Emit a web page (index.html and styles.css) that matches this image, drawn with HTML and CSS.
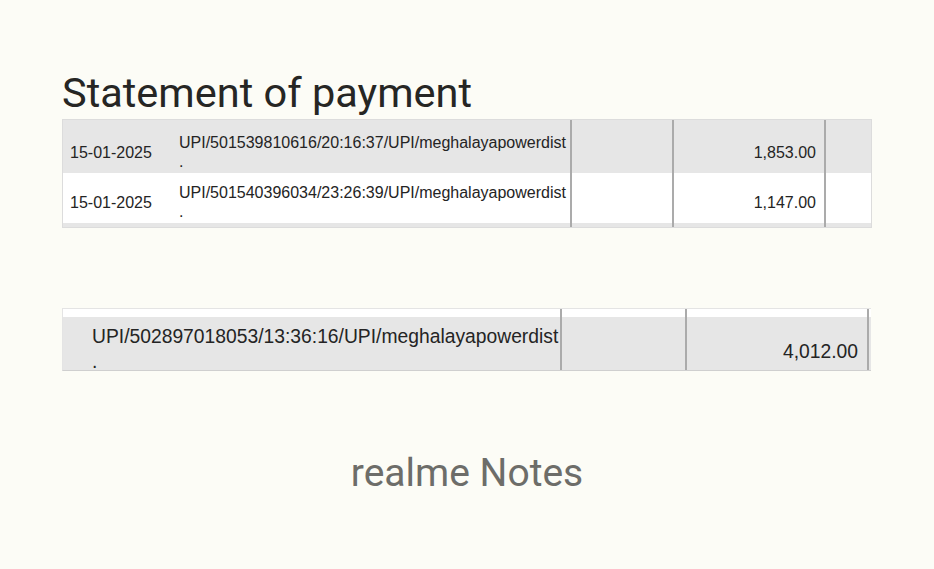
FILE: index.html
```html
<!DOCTYPE html>
<html>
<head>
<meta charset="utf-8">
<link rel="stylesheet" href="styles.css">
</head>
<body>
<main class="page">
  <h1 class="title">Statement of payment</h1>

  <section class="stmt stmt-a">
    <div class="row r1">
      <div class="c date">15-01-2025</div>
      <div class="c desc">UPI/501539810616/20:16:37/UPI/meghalayapowerdist<br>.</div>
      <div class="c line"></div>
      <div class="c line amt">1,853.00</div>
      <div class="c line"></div>
    </div>
    <div class="row r2">
      <div class="c date">15-01-2025</div>
      <div class="c desc">UPI/501540396034/23:26:39/UPI/meghalayapowerdist<br>.</div>
      <div class="c line"></div>
      <div class="c line amt">1,147.00</div>
      <div class="c line"></div>
    </div>
    <div class="row strip">
      <div class="c"></div>
      <div class="c"></div>
      <div class="c line"></div>
      <div class="c line"></div>
      <div class="c line"></div>
    </div>
  </section>

  <section class="stmt stmt-b">
    <div class="row top">
      <div class="c"></div>
      <div class="c line"></div>
      <div class="c line"></div>
      <div class="c line"></div>
    </div>
    <div class="row main">
      <div class="c desc">UPI/502897018053/13:36:16/UPI/meghalayapowerdist<br>.</div>
      <div class="c line"></div>
      <div class="c line amt">4,012.00</div>
      <div class="c line"></div>
    </div>
  </section>

  <footer class="brand">realme Notes</footer>
</main>
</body>
</html>
```

FILE: styles.css
```css
html, body {
  margin: 0;
  padding: 0;
  background: #fcfcf6;
}

.page {
  width: 934px;
  height: 569px;
  padding-top: 73px;
  box-sizing: border-box;
  overflow: hidden;
}

.title {
  margin: 0 0 6px 62px;
  font-family: Roboto, "Noto Sans", sans-serif;
  font-weight: 400;
  font-size: 41.5px;
  line-height: 40px;
  color: #262624;
}

.stmt {
  margin-left: 62px;
  font-family: "Liberation Sans", Arial, sans-serif;
  color: #242424;
  background: #fff;
}

.row {
  display: grid;
  overflow: hidden;
}

.c {
  box-sizing: border-box;
  min-width: 0;
  white-space: nowrap;
}

.line {
  border-left: 2px solid #ababab;
}

/* first statement block */
.stmt-a {
  width: 810px;
  border: 1px solid #dcdcdc;
  box-sizing: border-box;
  font-size: 16px;
}

.stmt-a .row {
  grid-template-columns: 116px 391px 102px 152px 47px;
}

.stmt-a .r1 {
  height: 53px;
  background: #e6e6e6;
  --pt: 13px;
}

.stmt-a .r2 {
  height: 50px;
  background: #ffffff;
  --pt: 9.5px;
}

.stmt-a .strip {
  height: 4px;
  background: #e6e6e6;
}

.stmt-a .desc {
  padding-top: var(--pt);
  line-height: 19px;
}

.stmt-a .date {
  padding: calc(var(--pt) + 10px) 0 0 7px;
  line-height: 19px;
}

.stmt-a .amt {
  padding: calc(var(--pt) + 10px) 8px 0 0;
  line-height: 19px;
  text-align: right;
}

/* second statement block */
.stmt-b {
  width: 808px;
  margin-top: 80px;
  border-top: 1px solid #e4e4e4;
  border-bottom: 1px solid #cfcfcf;
  border-left: 1px solid #e4e4e4;
  font-size: 19.3px;
}

.stmt-b .row {
  grid-template-columns: 497px 125px 182px 3px;
}

.stmt-b .top {
  height: 8px;
  background: #ffffff;
}

.stmt-b .main {
  height: 53px;
  background: #e6e6e6;
}

.stmt-b .desc {
  padding: 7px 0 0 29px;
  line-height: 25px;
}

.stmt-b .amt {
  padding: 22px 9px 0 0;
  line-height: 25px;
  text-align: right;
}

.brand {
  margin-top: 82px;
  text-align: center;
  font-family: Roboto, "Noto Sans", sans-serif;
  font-size: 39px;
  line-height: 40px;
  color: #6d6d69;
}
```
